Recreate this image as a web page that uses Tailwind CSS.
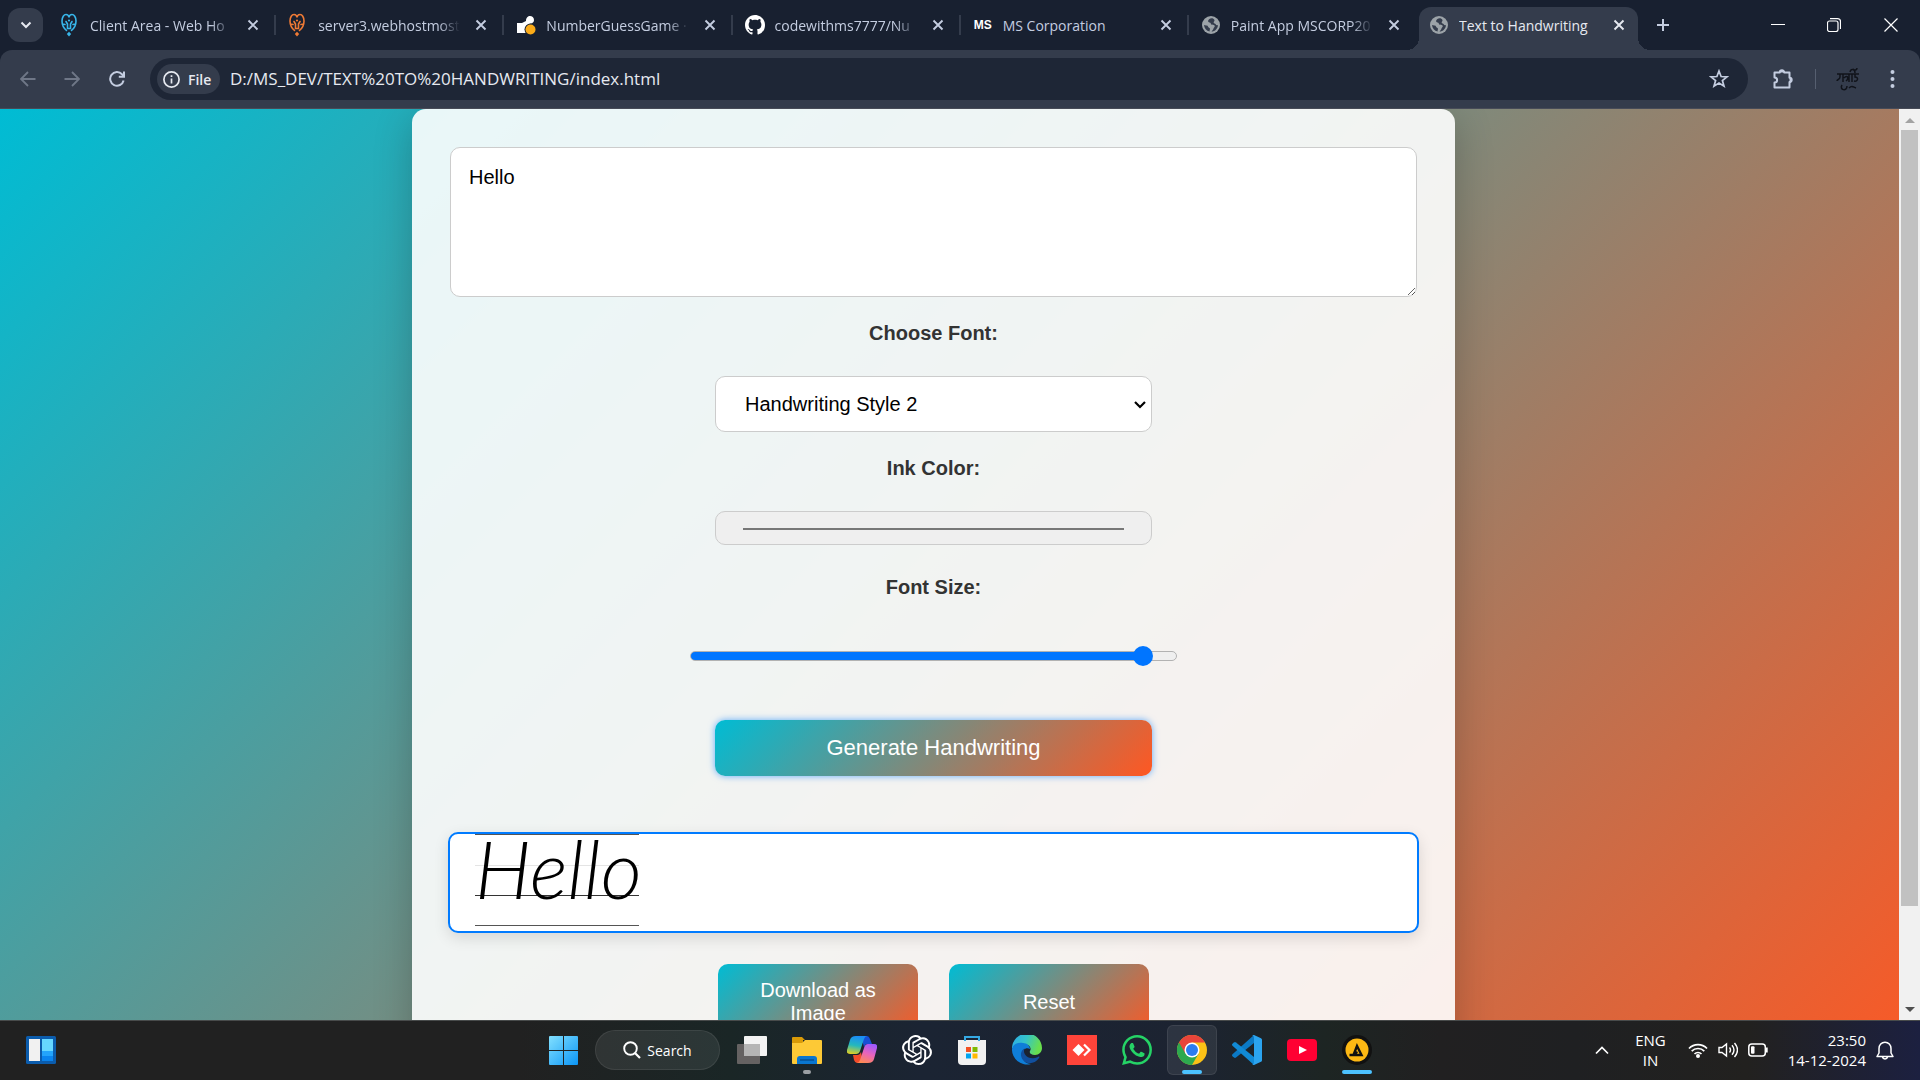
<!DOCTYPE html>
<html lang="en">
<head>
<meta charset="utf-8">
<title>Text to Handwriting</title>
<script src="https://cdn.jsdelivr.net/npm/@tailwindcss/browser@4"></script>
</head>
<body class="flex h-screen flex-col overflow-hidden bg-[#182030] font-['Open_Sans','Noto_Sans',sans-serif] text-[#c4cde0]">

<svg class="hidden">
  <symbol id="x" viewBox="0 0 12 12"><path d="M1.500 1.500l9 9M10.500 1.500l-9 9" stroke="currentColor" stroke-width="1.900" fill="none"/></symbol>
  <symbol id="globe" viewBox="0 0 18 18"><circle cx="9" cy="9" r="9" fill="#9ca3a8"/><path d="M10.500 2.200c-2.300-.4-3.700.9-4.300 2.300-.4 1.100.3 1.900 1.400 2 1.100.1 1.200.9 1.300 1.600.2 1.200 1.700.6 2.900 1 1.300.4 1.200 1.600.3 2.400-.7.600-.5 1.500-1.200 2.300-.5.600-.9 1.300-1.400 1.800 3.600-.3 6.400-3.100 6.500-6.700-.9.500-1.900.3-2.300-.6-.5-1-1.700-.6-2-1.600-.3-1 .9-1.400.8-2.400-.1-.8-.7-1.500-2-2.100zM2 9c.2 3.400 2.500 5.800 5.600 6.500-.2-1.100.6-1.900.3-3-.3-1-1.500-.8-1.800-1.800-.3-1-.9-1.400-2-1.300z" fill="#343c4c"/></symbol>
  <symbol id="host" viewBox="0 0 18 24"><path d="M6.500 17.500C3.500 15 2 11.500 2 8c0-4 2-6.500 4-6.500S8.800 3 9 4.500C9.200 3 10 1.500 12 1.500S16 4 16 8c0 3.500-1.500 7-4.500 9.500M6 8.500l1.500 2.500v4.500h3V11L12 8.500M2.500 11l2.500.5M15.500 11l-2.500.5" fill="none" stroke="currentColor" stroke-width="1.600" stroke-linecap="round"/><circle cx="9" cy="7.500" r="1.100" fill="currentColor"/><path d="M9 18.800l2.200 2.200L9 23.500 6.800 21z" fill="currentColor"/></symbol>
</svg>

<!-- Tab strip -->
<header class="flex h-[50px] shrink-0 items-stretch pl-2">
  <button aria-label="Search tabs" class="mt-2 mr-[7px] grid h-[34px] w-[35px] shrink-0 place-items-center rounded-xl bg-[#343c4c]">
    <svg class="size-3" viewBox="0 0 12 12"><path d="M1.500 3.500L6 8l4.500-4.500" fill="none" stroke="#e6e9f0" stroke-width="2"/></svg>
  </button>
  <nav class="flex min-w-0 max-w-[1596px] flex-1 text-[14px]">
    <div class="flex min-w-0 flex-1 items-center pl-2.5">
      <svg class="h-6 w-[18px] shrink-0 text-[#38b6ea]"><use href="#host"/></svg>
      <a href="#" class="ml-3 min-w-0 flex-1 overflow-hidden whitespace-nowrap mask-r-from-85%">Client Area - Web Ho</a>
      <button aria-label="Close tab" class="mx-[15px]"><svg class="size-3"><use href="#x"/></svg></button>
      <span class="mr-0.5 h-5 w-0.5 bg-[#343c4c]"></span>
    </div>
    <div class="flex min-w-0 flex-1 items-center pl-2.5">
      <svg class="h-6 w-[18px] shrink-0 text-[#ef7a35]"><use href="#host"/></svg>
      <a href="#" class="ml-3 min-w-0 flex-1 overflow-hidden whitespace-nowrap mask-r-from-85%">server3.webhostmost</a>
      <button aria-label="Close tab" class="mx-[15px]"><svg class="size-3"><use href="#x"/></svg></button>
      <span class="mr-0.5 h-5 w-0.5 bg-[#343c4c]"></span>
    </div>
    <div class="flex min-w-0 flex-1 items-center pl-2.5">
      <svg class="size-5 shrink-0" viewBox="0 0 20 20"><path d="M1 18V8h5l4-2c0-7 8-6 8-1 0 3-3 4-6 4v9z" fill="#fff"/><circle cx="14.500" cy="14.500" r="6" fill="#182030"/><circle cx="14.500" cy="14.500" r="5" fill="#fbab18"/></svg>
      <a href="#" class="ml-2.5 min-w-0 flex-1 overflow-hidden whitespace-nowrap mask-r-from-85%">NumberGuessGame ·</a>
      <button aria-label="Close tab" class="mx-[15px]"><svg class="size-3"><use href="#x"/></svg></button>
      <span class="mr-0.5 h-5 w-0.5 bg-[#343c4c]"></span>
    </div>
    <div class="flex min-w-0 flex-1 items-center pl-2.5">
      <svg class="size-5 shrink-0" viewBox="0 0 16 16"><path fill="#fff" d="M8 0C3.580 0 0 3.580 0 8c0 3.540 2.290 6.530 5.470 7.590.4.070.55-.17.55-.38 0-.19-.01-.82-.01-1.490-2.010.37-2.530-.49-2.690-.94-.09-.23-.48-.94-.82-1.130-.28-.15-.68-.52-.01-.53.63-.01 1.080.58 1.230.82.72 1.210 1.870.87 2.330.66.070-.52.28-.87.510-1.070-1.780-.2-3.640-.89-3.640-3.950 0-.87.31-1.590.82-2.150-.08-.2-.36-1.020.08-2.120 0 0 .67-.21 2.200.82.64-.18 1.320-.27 2-.27s1.360.090 2 .27c1.530-1.040 2.200-.82 2.200-.82.44 1.100.16 1.920.08 2.120.51.56.82 1.270.82 2.150 0 3.070-1.870 3.750-3.650 3.950.29.25.54.73.54 1.480 0 1.070-.01 1.930-.01 2.200 0 .21.15.46.55.38A8.010 8.010 0 0016 8c0-4.420-3.580-8-8-8z"/></svg>
      <a href="#" class="ml-2.5 min-w-0 flex-1 overflow-hidden whitespace-nowrap mask-r-from-85%">codewithms7777/Nu</a>
      <button aria-label="Close tab" class="mx-[15px]"><svg class="size-3"><use href="#x"/></svg></button>
      <span class="mr-0.5 h-5 w-0.5 bg-[#343c4c]"></span>
    </div>
    <div class="flex min-w-0 flex-1 items-center pl-2.5">
      <span class="w-5 shrink-0 text-center font-['Liberation_Sans_Narrow','Liberation_Sans',sans-serif] text-[12px] font-bold text-white">MS</span>
      <a href="#" class="ml-2.5 min-w-0 flex-1 overflow-hidden whitespace-nowrap">MS Corporation</a>
      <button aria-label="Close tab" class="mx-[15px]"><svg class="size-3"><use href="#x"/></svg></button>
      <span class="mr-0.5 h-5 w-0.5 bg-[#343c4c]"></span>
    </div>
    <div class="flex min-w-0 flex-1 items-center pl-2.5">
      <svg class="ml-px size-[18px] shrink-0"><use href="#globe"/></svg>
      <a href="#" class="ml-[11px] min-w-0 flex-1 overflow-hidden whitespace-nowrap mask-r-from-85%">Paint App MSCORP20</a>
      <button aria-label="Close tab" class="mr-[19px] ml-[15px]"><svg class="size-3"><use href="#x"/></svg></button>
    </div>
    <div class="relative mt-[7px] mr-2 flex min-w-0 max-w-[219px] flex-1 items-center rounded-t-xl bg-[#343c4c] pb-[7px] pl-2.5 text-[#e6e9f0]">
      <span class="absolute bottom-0 -left-3 size-3 bg-radial-[at_0%_0%] from-[#182030] from-[12px] to-[#343c4c] to-[12px]"></span>
      <span class="absolute -right-3 bottom-0 size-3 bg-radial-[at_100%_0%] from-[#182030] from-[12px] to-[#343c4c] to-[12px]"></span>
      <svg class="ml-px size-[18px] shrink-0"><use href="#globe"/></svg>
      <a href="#" class="ml-[11px] flex-1 overflow-hidden whitespace-nowrap">Text to Handwriting</a>
      <button aria-label="Close tab" class="mr-[13px] ml-2"><svg class="size-3"><use href="#x"/></svg></button>
    </div>
  </nav>
  <button aria-label="New tab" class="ml-2.5"><svg class="size-3.5" viewBox="0 0 14 14"><path d="M7 1v12M1 7h12" stroke="currentColor" stroke-width="2"/></svg></button>
  <div class="ml-auto flex">
    <button aria-label="Minimize" class="grid w-14 place-items-center"><svg class="size-3.5" viewBox="0 0 14 14"><path d="M0 6.500h14" stroke="#fff"/></svg></button>
    <button aria-label="Restore" class="grid w-14 place-items-center"><svg class="size-3.5" viewBox="0 0 14 14"><rect x=".5" y="3" width="10.500" height="10.500" rx="2" fill="none" stroke="#fff" stroke-width="1.200"/><path d="M3 .6h7.500c2 0 3 1 3 3V11" fill="none" stroke="#fff" stroke-width="1.200"/></svg></button>
    <button aria-label="Close" class="grid w-[58px] place-items-center"><svg class="size-3.5" viewBox="0 0 14 14"><path d="M.5.5l13 13M13.500.5l-13 13" stroke="#fff" stroke-width="1.200"/></svg></button>
  </div>
</header>

<!-- Address bar -->
<div class="flex h-[59px] shrink-0 items-center rounded-t-xl border-b border-[#474b57] bg-[#343c4c]">
  <button aria-label="Back" class="ml-5"><svg class="size-4" viewBox="0 0 16 16"><path d="M15.500 8H1M8 1L1 8l7 7" fill="none" stroke="#6f7787" stroke-width="1.800"/></svg></button>
  <button aria-label="Forward" class="ml-7"><svg class="size-4" viewBox="0 0 16 16"><path d="M.5 8H15M8 1l7 7-7 7" fill="none" stroke="#6f7787" stroke-width="1.800"/></svg></button>
  <button aria-label="Reload" class="ml-[29px]"><svg class="size-4" viewBox="0 0 16 16"><path d="M14.600 9.500A6.800 6.800 0 1 1 13 3.300L15 5.300M15 .5v5.300H9.800" fill="none" stroke="currentColor" stroke-width="2"/></svg></button>
  <div class="ml-[25px] flex h-[42px] flex-1 items-center rounded-full bg-[#1e2636] pl-[7px]">
    <button class="flex h-[30px] w-[63px] items-center gap-2 rounded-full bg-[#343c4c] pl-1.5 text-[14px] font-semibold text-[#e6e9f0]">
      <svg class="size-[17px] shrink-0" viewBox="0 0 17 17"><circle cx="8.500" cy="8.500" r="7.600" fill="none" stroke="currentColor" stroke-width="1.700"/><path d="M8.500 7.500v5M8.500 4.300v1.800" stroke="currentColor" stroke-width="1.700"/></svg>File
    </button>
    <input aria-label="Address" value="D:/MS_DEV/TEXT%20TO%20HANDWRITING/index.html" class="ml-2.5 flex-1 bg-transparent text-[17px] text-[#e6e9f0] outline-none">
    <button aria-label="Bookmark" class="mr-[19px]"><svg class="size-5" viewBox="0 0 20 20"><path d="M10 2l2.100 5.500 5.900.3-4.600 3.700 1.600 5.700-5-3.200-5 3.200 1.600-5.700L2 7.800l5.900-.3z" fill="none" stroke="currentColor" stroke-width="1.700"/></svg></button>
  </div>
  <button aria-label="Extensions" class="ml-6"><svg class="size-[22px]" viewBox="0 0 22 22"><path d="M2.500 4.500h5.300a2.200 2.200 0 0 1 4.400 0h5.300v5.200a2.200 2.200 0 0 1 0 4.400v5.400h-15v-5c3.500 0 3.500-5 0-5z" fill="none" stroke="currentColor" stroke-width="2" stroke-linejoin="round"/><path d="M8 4.500a2 2 0 0 1 4 0zM17.500 10a2 2 0 0 1 0 4z" fill="currentColor"/></svg></button>
  <span class="ml-[21px] h-5 w-px bg-[#565f70]"></span>
  <button aria-label="Profile" class="ml-5"><svg class="size-6" viewBox="0 0 24 24" fill="none" stroke="#10131a" stroke-width="1.500"><path d="M1 7h22M4 7v3c0 3-3 2-3 4M7 7v8M8 11c4-4 5 1 2 3M13 7v8M16 7v8M19 7v3c4 0 3 5-1 4M14 5c1-4 5-3 5 1M17 2c2 2 4 1 4-1M6 18c-3 5 5 7 5 1M13 21c3-3 4-1 7 0"/></svg></button>
  <button aria-label="Menu" class="mr-[18px] ml-[23px]"><svg class="h-5 w-[19px]" viewBox="0 0 19 20"><g fill="currentColor"><circle cx="9.500" cy="3" r="2"/><circle cx="9.500" cy="10" r="2"/><circle cx="9.500" cy="17" r="2"/></g></svg></button>
</div>

<!-- Page viewport -->
<div class="flex min-h-0 flex-1 overflow-hidden font-['Liberation_Sans',Arial,sans-serif]">
  <div class="h-full flex-1 overflow-hidden">
    <main class="flex min-h-[1020px] justify-center bg-linear-[135deg,#00bcd4,#ff5722] pr-8">
      <form class="flex w-full max-w-[1043px] flex-col items-center rounded-[14px] bg-white/90 px-9 pt-[38px] pb-10 text-[20px] text-black shadow-[0_10px_38px_rgba(0,0,0,0.22)]">
        <div class="flex w-full px-0.5"><textarea aria-label="Text" class="h-[150px] w-full resize rounded-[10px] border border-[#ccc] bg-white px-[18px] py-[18px] leading-[23px]">Hello</textarea></div>
        <label for="font" class="mt-[21px] leading-[30px] font-bold text-[#333]">Choose Font:</label>
        <div class="relative mt-7 w-[45%]">
          <select id="font" class="block h-14 w-full appearance-none rounded-[10px] border border-[#ccc] bg-white px-[29px]"><option>Handwriting Style 2</option></select>
          <svg class="pointer-events-none absolute top-6 right-1.5 h-2.5 w-3" viewBox="0 0 12 10"><path d="M1 2l5 5 5-5" fill="none" stroke="#000" stroke-width="2.200"/></svg>
        </div>
        <label for="ink" class="mt-[21px] leading-[30px] font-bold text-[#333]">Ink Color:</label>
        <input id="ink" type="color" value="#000000" class="mt-7 block h-[34px] w-[45%] appearance-none rounded-[10px] border border-[#ccc] bg-[#efefef] px-[27px] pt-4 pb-3.5 [&::-webkit-color-swatch]:rounded-none [&::-webkit-color-swatch]:border [&::-webkit-color-swatch]:border-[#777] [&::-webkit-color-swatch-wrapper]:p-0">
        <label for="size" class="mt-[27px] leading-[30px] font-bold text-[#333]">Font Size:</label>
        <input id="size" type="range" min="0" max="100" value="95" class="mt-11 block h-5 w-[calc(50%+2px)] appearance-none bg-transparent [&::-webkit-slider-runnable-track]:h-2.5 [&::-webkit-slider-runnable-track]:rounded-full [&::-webkit-slider-runnable-track]:border [&::-webkit-slider-runnable-track]:border-[#b2b2b2] [&::-webkit-slider-runnable-track]:bg-[linear-gradient(90deg,#0075ff_93%,#efefef_93%)] [&::-webkit-slider-runnable-track]:bg-origin-border [&::-webkit-slider-thumb]:-mt-1.5 [&::-webkit-slider-thumb]:size-5 [&::-webkit-slider-thumb]:appearance-none [&::-webkit-slider-thumb]:rounded-full [&::-webkit-slider-thumb]:bg-[#0075ff]">
        <button type="button" class="mt-[54px] h-14 w-[45%] rounded-[10px] bg-linear-[135deg,#00bcd4,#ff5722] pb-0.5 text-[22px] text-white shadow-[0_0_7px_rgba(0,123,255,0.6)]">Generate Handwriting</button>
        <!-- Ruled sample of the generated text -->
        <output class="mt-14 block h-[101px] w-full overflow-hidden rounded-[10px] border-2 border-[#007bff] bg-white pl-[25px] shadow-[0_5px_15px_rgba(0,0,0,0.12)]">
          <span class="relative block h-[92px] w-[164px] border-y border-[#555]">
            <span class="absolute inset-x-0 top-[30px] h-px bg-[#e4e4e4]"></span>
            <span class="absolute inset-x-0 top-[60px] h-px bg-[#333]"></span>
            <span class="absolute -top-3 left-0 font-[Lato,sans-serif] text-[80px] leading-[90px] font-light italic">Hello</span>
          </span>
        </output>
        <div class="mt-[31px] flex gap-[31px]">
          <button type="button" class="h-[76px] w-[200px] rounded-[10px] bg-linear-[135deg,#00bcd4,#ff5722] px-8 leading-[23px] text-white">Download as Image</button>
          <button type="reset" class="h-[76px] w-[200px] rounded-[10px] bg-linear-[135deg,#00bcd4,#ff5722] leading-[23px] text-white">Reset</button>
        </div>
      </form>
    </main>
  </div>
  <div class="flex w-[21px] flex-col items-center bg-[#f1f1f1]">
    <svg class="h-[21px] w-3 shrink-0" viewBox="0 0 12 21"><path d="M1 14l5-5 5 5z" fill="#a3a3a3"/></svg>
    <div class="h-[776px] w-[17px] bg-[#c1c1c1]"></div>
    <svg class="mt-auto h-[21px] w-3 shrink-0" viewBox="0 0 12 21"><path d="M1 8l5 5 5-5z" fill="#505050"/></svg>
  </div>
</div>

<!-- Taskbar -->
<footer class="grid h-[60px] shrink-0 grid-cols-[1fr_auto_1fr] items-center border-t border-[#484b4b] bg-linear-[90deg,#212121_0%,#212121_27%,#1a2626_38%,#1b2433_48%,#1c2331_62%,#1d2523_69%,#212021_75%,#1f2022_82%,#22211f_91%,#1c2040_100%] pb-px text-[14px] text-white">
  <button aria-label="Widgets" class="ml-[26px] w-[30px]"><svg viewBox="0 0 30 28"><rect width="30" height="28" rx="1.500" fill="#0b5cad"/><rect x="3" y="3" width="11" height="22" fill="#f1f1f1"/><path d="M16 3h11v12H16z" fill="#66d7ff"/><path d="M16 15h11v5H16z" fill="#23a4fb"/><path d="M16 20h11v5H16z" fill="#0a84ee"/></svg></button>
  <div class="flex items-center gap-[5px]">
    <button aria-label="Start" class="grid size-[50px] place-items-center"><svg class="size-[29px]" viewBox="0 0 29 29"><defs><linearGradient id="win" x2="1" y2="1"><stop stop-color="#82e0ff"/><stop offset="1" stop-color="#0b95f5"/></linearGradient></defs><path d="M0 1q0-1 1-1h13v14H0zM15 0h13q1 0 1 1v13H15zM0 15h14v14H1q-1 0-1-1zM15 15h14v13q0 1-1 1H15z" fill="url(#win)"/></svg></button>
    <button class="mx-0.5 flex h-10 w-[125px] items-center justify-center gap-1.5 rounded-full border border-white/8 bg-white/8"><svg class="size-[18px]" viewBox="0 0 18 18"><circle cx="7.500" cy="7.500" r="6.300" fill="none" stroke="#fff" stroke-width="1.900"/><path d="M12 12l5 5" stroke="#fff" stroke-width="2.200"/></svg>Search</button>
    <button aria-label="Task view" class="grid size-[50px] place-items-center"><svg class="size-[30px]" viewBox="0 0 30 30"><rect y="9" width="23" height="20" rx="1" fill="#656262"/><rect x="7" y="1" width="23" height="20" rx="1" fill="#f3f3f3"/><path d="M7 9h16v12H7z" fill="#b5b5b5"/></svg></button>
    <button aria-label="File Explorer" class="relative grid size-[50px] place-items-center"><svg class="size-[30px]" viewBox="0 0 30 30"><path d="M0 3q0-1 1-1h9l3 3h-2v6H0z" fill="#d99a07"/><path d="M0 8h10l3-3h16q1 0 1 1v22q0 1-1 1H1q-1 0-1-1z" fill="#fdc936"/><path d="M5 29v-5q0-3 3-3h14q3 0 3 3v5z" fill="#0a76cf"/><path d="M8 25h14" stroke="#064b8a" stroke-width="1.300"/></svg><span class="absolute bottom-px h-1 w-2 rounded-full bg-[#9a9fa3]"></span></button>
    <button aria-label="Copilot" class="grid size-[50px] place-items-center"><svg class="size-[30px]" viewBox="0 0 30 30"><defs><linearGradient id="ca" x1=".4" x2=".2" y2="1"><stop stop-color="#1b8df5"/><stop offset=".5" stop-color="#24b8bd"/><stop offset="1" stop-color="#e5d01f"/></linearGradient><linearGradient id="cb" x1=".7" x2=".3" y2="1"><stop stop-color="#9d59ff"/><stop offset=".5" stop-color="#e964bb"/><stop offset="1" stop-color="#ff8a52"/></linearGradient></defs><path d="M14 1h6q2 0 3 3l2 5h-5q-2 0-3 3z" fill="#1750d4"/><path d="M16 28h-6q-2 0-3-3l-1-5h5q2 0 3-3z" fill="#f24c2b"/><path d="M9 1h11q-2 0-3 3l-4 12q-1 3-4 3H3q-4 0-3-4L3 5q1-4 6-4z" fill="url(#ca)"/><path d="M21 28H10q2 0 3-3l4-12q1-4 4-4h6q4 0 3 4l-3 11q-1 4-6 4z" fill="url(#cb)"/></svg></button>
    <button aria-label="ChatGPT" class="grid size-[50px] place-items-center"><svg class="size-[30px]" viewBox="0 0 24 24"><path fill="#fff" d="M22.282 9.821a5.985 5.985 0 0 0-.516-4.910 6.046 6.046 0 0 0-6.510-2.900A6.065 6.065 0 0 0 4.981 4.182a5.985 5.985 0 0 0-3.998 2.900 6.046 6.046 0 0 0 .743 7.097 5.980 5.980 0 0 0 .510 4.911 6.051 6.051 0 0 0 6.515 2.900A5.985 5.985 0 0 0 13.260 24a6.056 6.056 0 0 0 5.772-4.206 5.990 5.990 0 0 0 3.998-2.900 6.056 6.056 0 0 0-.747-7.073zM13.260 22.430a4.476 4.476 0 0 1-2.876-1.040l.141-.081 4.779-2.758a.795.795 0 0 0 .392-.681v-6.737l2.020 1.169a.071.071 0 0 1 .038.052v5.583a4.504 4.504 0 0 1-4.494 4.493zM3.600 18.304a4.470 4.470 0 0 1-.535-3.014l.142.085 4.783 2.758a.771.771 0 0 0 .780 0l5.843-3.369v2.333a.080.080 0 0 1-.033.061L9.740 19.950a4.500 4.500 0 0 1-6.140-1.646zM2.340 7.896a4.485 4.485 0 0 1 2.366-1.973V11.600a.766.766 0 0 0 .388.676l5.815 3.355-2.020 1.168a.076.076 0 0 1-.071 0l-4.830-2.786A4.504 4.504 0 0 1 2.340 7.872zm16.597 3.855l-5.833-3.387L15.119 7.200a.076.076 0 0 1 .071 0l4.830 2.791a4.494 4.494 0 0 1-.676 8.105v-5.678a.790.790 0 0 0-.407-.667zm2.010-3.023l-.141-.085-4.774-2.782a.776.776 0 0 0-.785 0L9.409 9.230V6.897a.066.066 0 0 1 .028-.061l4.830-2.787a4.500 4.500 0 0 1 6.680 4.660zm-12.640 4.135l-2.020-1.164a.080.080 0 0 1-.038-.057V6.075a4.500 4.500 0 0 1 7.375-3.453l-.142.080L8.704 5.460a.795.795 0 0 0-.393.681zm1.097-2.365l2.602-1.500 2.607 1.500v2.999l-2.597 1.500-2.607-1.500z"/></svg></button>
    <button aria-label="Store" class="grid size-[50px] place-items-center"><svg class="size-[30px]" viewBox="0 0 30 30"><path d="M1 5h28v21q0 4-4 4H5q-4 0-4-4z" fill="#f1f1f1"/><path d="M8 6V2h14v4" fill="none" stroke="#35a9e4" stroke-width="2"/><path d="M9 12h5v5H9z" fill="#f25022"/><path d="M15.500 12h5v5h-5z" fill="#7fba00"/><path d="M9 18.500h5v5H9z" fill="#00a4ef"/><path d="M15.500 18.500h5v5h-5z" fill="#ffb900"/></svg></button>
    <button aria-label="Edge" class="grid size-[50px] place-items-center"><svg class="size-[30px]" viewBox="0 0 30 30"><defs><linearGradient id="ea" x2="1" y2=".3"><stop stop-color="#2aa8ea"/><stop offset=".5" stop-color="#35c4c9"/><stop offset="1" stop-color="#68df4e"/></linearGradient></defs><path d="M0 14A15 15 0 0 1 30 13c0 4-3 7-7 7-4 0-6-2-5-4 2-3-1-7-6-7-5-1-10 1-12 5z" fill="url(#ea)"/><path d="M0 14c1-5 6-7 11-6 4 0 7 3 7 6-3-2-8 0-8 5 0 6 4 10 9 10A15 15 0 0 1 0 14z" fill="#0f7ed8"/><path d="M13 13c-5 3-5 8-2 12 4 5 12 4 16-2 1-1 0-2-1-1-7 3-13 0-14-5 0-2 0-3 1-4z" fill="#114f9e"/></svg></button>
    <button aria-label="AnyDesk" class="grid size-[50px] place-items-center"><svg class="size-[30px]" viewBox="0 0 30 30"><path fill="#ff443a" d="M0 0h30v30H0z"/><path d="M11.500 9l6 6-6 6-6-6z" fill="#fff"/><path d="M17 9.500l5.500 5.500-5.500 5.500" fill="none" stroke="#fff" stroke-width="2.200"/></svg></button>
    <button aria-label="WhatsApp" class="grid size-[50px] place-items-center"><svg class="size-[30px]" viewBox="0 0 24 24"><path fill="#25d366" d="M17.472 14.382c-.297-.149-1.758-.867-2.030-.967-.273-.099-.471-.148-.670.150-.197.297-.767.966-.940 1.164-.173.199-.347.223-.644.075-.297-.150-1.255-.463-2.390-1.475-.883-.788-1.480-1.761-1.653-2.059-.173-.297-.018-.458.130-.606.134-.133.298-.347.446-.520.149-.174.198-.298.298-.497.099-.198.050-.371-.025-.520-.075-.149-.669-1.612-.916-2.207-.242-.579-.487-.500-.669-.510-.173-.008-.371-.010-.570-.010-.198 0-.520.074-.792.372-.272.297-1.040 1.016-1.040 2.479 0 1.462 1.065 2.875 1.213 3.074.149.198 2.096 3.200 5.077 4.487.709.306 1.262.489 1.694.625.712.227 1.360.195 1.871.118.571-.085 1.758-.719 2.006-1.413.248-.694.248-1.289.173-1.413-.074-.124-.272-.198-.570-.347m-5.421 7.403h-.004a9.870 9.870 0 0 1-5.031-1.378l-.361-.214-3.741.982.998-3.648-.235-.374a9.860 9.860 0 0 1-1.510-5.260c.001-5.450 4.436-9.884 9.888-9.884 2.640 0 5.122 1.030 6.988 2.898a9.825 9.825 0 0 1 2.893 6.994c-.003 5.450-4.437 9.884-9.885 9.884m8.413-18.297A11.815 11.815 0 0 0 12.050 0C5.495 0 .160 5.335.157 11.892c0 2.096.547 4.142 1.588 5.945L.057 24l6.305-1.654a11.882 11.882 0 0 0 5.683 1.448h.005c6.554 0 11.890-5.335 11.893-11.893a11.821 11.821 0 0 0-3.480-8.413z"/></svg></button>
    <button aria-label="Chrome" class="relative grid size-[50px] place-items-center rounded-md border border-white/8 bg-white/8"><svg class="size-[30px]" viewBox="0 0 30 30"><circle cx="15" cy="15" r="15" fill="#fbc116"/><path d="M15 15L2 7.500A15 15 0 0 0 15 30l6.500-11.200z" fill="#2da94f"/><path d="M15 7.500h13A15 15 0 0 0 2 7.500l6.500 11.200z" fill="#e8443a"/><circle cx="15" cy="15" r="7.500" fill="#fff"/><circle cx="15" cy="15" r="6" fill="#2b7cf0"/></svg><span class="absolute bottom-0 h-1 w-5 rounded-full bg-[#4cc2ff]"></span></button>
    <button aria-label="VS Code" class="grid size-[50px] place-items-center"><svg class="size-[30px]" viewBox="0 0 30 30"><path d="M22 0v8L4 22.500q-1 .8-2 0l-1.500-1.300q-1-1 0-2z" fill="#0b79c5"/><path d="M22 30v-8L4 7.500q-1-.8-2 0L.5 8.800q-1 1 0 2z" fill="#118ad6"/><path d="M22 0l7 3.200q1 .5 1 1.600v20.400q0 1.100-1 1.600L22 30q-1.500 0-2-1 2 1 2-2V3q0-3-2-2 .8-1 2-1z" fill="#2ba4f0"/></svg></button>
    <button aria-label="YouTube" class="grid size-[50px] place-items-center"><svg class="size-[30px]" viewBox="0 0 30 30"><rect y="4" width="30" height="22" rx="4" fill="#ff0033"/><path d="M12 11l8 4-8 4z" fill="#fff"/></svg></button>
    <button aria-label="Aternos" class="relative grid size-[50px] place-items-center"><svg class="size-[30px]" viewBox="0 0 30 30"><circle cx="15" cy="15" r="15" fill="#111"/><circle cx="15" cy="15" r="11.500" fill="#fdb813"/><path d="M7.500 20h4L15 11l4.500 9H13l2-3.500" fill="none" stroke="#111" stroke-width="2.400"/></svg><span class="absolute bottom-px h-1 w-[30px] rounded-full bg-[#4cc2ff]"></span></button>
  </div>
  <div class="flex items-center justify-end pr-[26px] text-[15px] leading-5">
    <button aria-label="Hidden icons" class="mr-[26px]"><svg class="size-3.5" viewBox="0 0 14 14"><path d="M1 10.500l6-6 6 6" fill="none" stroke="#fff" stroke-width="1.700"/></svg></button>
    <button class="mr-[22px] text-center">ENG<br>IN</button>
    <button aria-label="Network, volume, battery" class="mr-5 flex items-center gap-2.5">
      <svg class="h-4 w-5" viewBox="0 0 20 16"><path d="M1 6.500a12.500 12.500 0 0 1 18 0M3.700 9.200a8.700 8.700 0 0 1 12.600 0M6.500 12a5 5 0 0 1 7 0" fill="none" stroke="#fff" stroke-width="1.700"/><circle cx="10" cy="14" r="2" fill="#fff"/></svg>
      <svg class="h-[18px] w-5" viewBox="0 0 20 18"><path d="M1 6.500h3L8.500 3v12L4 11.500H1zM11.500 6.500q2 2.500 0 5M14 4.300q4 4.700 0 9.400M16.500 2q6 7 0 14" fill="none" stroke="#fff" stroke-width="1.400"/></svg>
      <svg class="h-3.5 w-5" viewBox="0 0 20 14"><rect x=".8" y="1" width="16.500" height="12" rx="3" fill="none" stroke="#fff" stroke-width="1.500"/><rect x="3" y="3.200" width="3.500" height="7.600" rx="1" fill="#fff"/><path d="M18.500 4.500v5" stroke="#fff" stroke-width="2.400"/></svg>
    </button>
    <button class="text-right">23:50<br>14-12-2024</button>
    <button aria-label="Notifications" class="ml-2.5"><svg class="h-[19px] w-[18px]" viewBox="0 0 18 19"><path d="M1 15.500h16l-2-3.500V7.500C15 4 12.500 1.200 9 1.200S3 4 3 7.500V12zM6.500 16c.5 2.500 4.500 2.500 5 0" fill="none" stroke="#fff" stroke-width="1.500" stroke-linejoin="round"/></svg></button>
  </div>
</footer>
</body>
</html>
